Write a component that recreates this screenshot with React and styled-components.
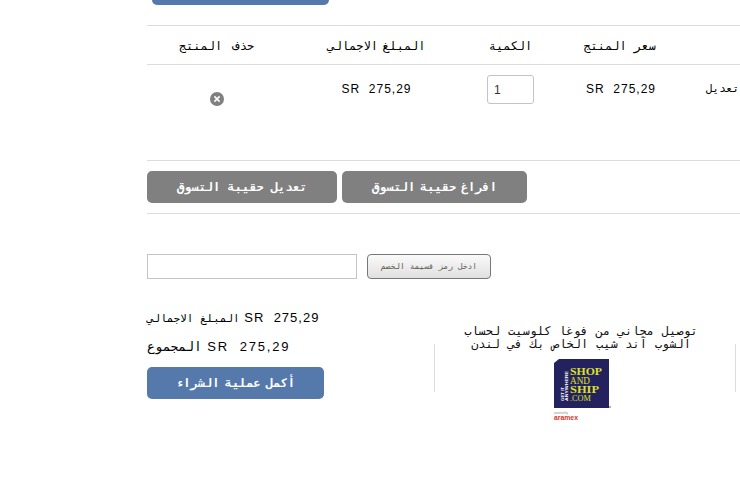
import React from 'react'
import styled, { createGlobalStyle } from 'styled-components'

const latin = '"Liberation Sans", sans-serif'
const arabic = '"DejaVu Sans Mono", monospace'

const GlobalStyle = createGlobalStyle`
  html, body {
    margin: 0;
    padding: 0;
    background: #fff;
    overflow: hidden;
  }
  body {
    font-family: ${latin};
    color: #000;
  }
`

const Page = styled.div`
  width: 740px;
  height: 480px;
  overflow: hidden;
  box-sizing: border-box;
  padding-left: 147px;
`

const Content = styled.div`
  width: 640px;
`

const TopButton = styled.div`
  width: 177px;
  height: 32px;
  margin: -27px 0 20px 5px;
  background: #5679ac;
  border-radius: 5px;
`

const TableRow = styled.div`
  display: grid;
  grid-template-columns: 139px 181px 87px 134px 99px;
  height: ${p => p.$height}px;
  border-top: 1px solid #ddd;
  box-sizing: border-box;
`

const HeadCell = styled.div`
  display: flex;
  align-items: center;
  justify-content: center;
  padding-top: 2px;
  padding-right: ${p => p.$shift || 0}px;
  font-family: ${arabic};
  font-size: 12px;
  word-spacing: ${p => p.$word || 0}px;
  direction: rtl;
`

const Cell = styled.div`
  display: flex;
  justify-content: ${p => p.$align || 'center'};
  padding-top: ${p => p.$top || 0}px;
  font-size: 12px;
  letter-spacing: 1px;
  white-space: pre;
`

const EditLink = styled.span`
  font-family: ${arabic};
  font-size: 11px;
  direction: rtl;
  margin-left: 18px;
`

const QtyInput = styled.input`
  width: 47px;
  height: 29px;
  box-sizing: border-box;
  border: 1px solid #c4c4c4;
  border-radius: 3px;
  padding: 0 0 0 6px;
  font: 12px ${latin};
  color: #333;
  outline: none;
`

const CartActions = styled.div`
  display: flex;
  gap: 5px;
  height: 54px;
  box-sizing: border-box;
  padding-top: 10px;
  border-top: 1px solid #ddd;
  border-bottom: 1px solid #ddd;
`

const GreyButton = styled.button`
  height: 32px;
  width: ${p => p.$width}px;
  border: 0;
  border-radius: 5px;
  padding: 0;
  background: #808080;
  color: #fff;
  font: bold 12px ${arabic};
  word-spacing: ${p => p.$word || 0}px;
  direction: rtl;
`

const CouponRow = styled.div`
  display: flex;
  gap: 10px;
  margin-top: 40px;
`

const CouponInput = styled.input`
  width: 210px;
  height: 25px;
  box-sizing: border-box;
  border: 1px solid #c4c4c4;
  outline: none;
  padding: 0;
`

const CouponButton = styled.button`
  width: 124px;
  height: 25px;
  box-sizing: border-box;
  border: 1px solid #777;
  border-radius: 4px;
  padding: 0;
  background: linear-gradient(#fafafa, #e0e0e0);
  color: #5c5a50;
  font: 8px ${arabic};
  direction: rtl;
`

const Bottom = styled.div`
  display: flex;
  margin-top: 30px;
`

const Totals = styled.div`
  width: 287px;
  display: flex;
  flex-direction: column;
  align-items: flex-start;
`

const TotalLine = styled.div`
  direction: rtl;
  height: 29px;
  line-height: 18px;
  font-size: 13px;
  letter-spacing: ${p => p.$spacing}px;
  white-space: pre;
`

const TotalLabel = styled.span`
  font-family: ${arabic};
  font-size: ${p => p.$size}px;
`

const BuyButton = styled.button`
  width: 177px;
  height: 32px;
  border: 0;
  border-radius: 5px;
  padding: 0;
  background: #5679ac;
  color: #fff;
  font: bold 12px ${arabic};
  word-spacing: -2px;
  direction: rtl;
`

const Promo = styled.div`
  width: 302px;
  display: flex;
  flex-direction: column;
  align-items: center;
  box-sizing: border-box;
  padding-right: 8px;
  margin-top: 16px;
`

const PromoText = styled.div`
  direction: rtl;
  width: 270px;
  text-align: center;
  font-family: ${arabic};
  font-size: 12px;
  line-height: 13px;
  word-spacing: 0.5px;
  color: #111;
`

const PromoBody = styled.div`
  width: 100%;
  display: flex;
  justify-content: center;
  box-sizing: border-box;
  padding-left: 1px;
  margin-top: 8px;
`

const PromoRules = styled.div`
  position: absolute;
  align-self: flex-start;
  width: 302px;
  height: 48px;
  margin-top: 19px;
  box-sizing: border-box;
  border-left: 1px solid #ddd;
  border-right: 1px solid #ddd;
`

const RemoveIcon = () => (
  <svg width="14" height="14" viewBox="0 0 14 14">
    <circle cx="7" cy="7" r="7" fill="#808080" />
    <path d="M4.4 4.4l5.2 5.2M9.6 4.4l-5.2 5.2" stroke="#fff" strokeWidth="1.6" />
  </svg>
)

const ShopLogo = () => (
  <svg width="55" height="62" viewBox="0 0 55 62" style={{ overflow: 'visible' }}>
    <path d="M0 4L5 0H55V49H0Z" fill="#24215f" />
    <g fontFamily="Liberation Serif, serif" fontWeight="700" fill="#dde222">
      <text x="16" y="16" fontSize="11" textLength="32" lengthAdjust="spacingAndGlyphs">SHOP</text>
      <text x="16" y="25" fontSize="9.5" fontWeight="400" textLength="20" lengthAdjust="spacingAndGlyphs">AND</text>
      <text x="16" y="34" fontSize="11" textLength="29" lengthAdjust="spacingAndGlyphs">SHIP</text>
      <text x="16" y="42" fontSize="9" fontWeight="400" textLength="21" lengthAdjust="spacingAndGlyphs">.COM</text>
    </g>
    <g fontFamily="Liberation Sans, sans-serif" fontWeight="700" fontSize="4" fill="#fff">
      <text transform="translate(10 42) rotate(-90)" textLength="14" lengthAdjust="spacingAndGlyphs">GET IT</text>
      <text transform="translate(14 42) rotate(-90)" textLength="30" lengthAdjust="spacingAndGlyphs">ANYWHERE</text>
    </g>
    <circle cx="56" cy="48" r="1" fill="#999" />
    <text x="0" y="54.5" fontFamily="Liberation Sans, sans-serif" fontSize="3" fill="#999" textLength="14">powered by</text>
    <text x="0" y="61" fontFamily="Liberation Sans, sans-serif" fontWeight="700" fontSize="7.5" fill="#d8352a" textLength="24" lengthAdjust="spacingAndGlyphs">aramex</text>
  </svg>
)

const price = 'SR  275,29'

function App() {
  return (
    <Page>
      <GlobalStyle />
      <Content>
        <TopButton />
        <TableRow $height={39}>
          <HeadCell $word={3}>حذف المنتج</HeadCell>
          <HeadCell $word={-3}>المبلغ الاجمالي</HeadCell>
          <HeadCell>الكمية</HeadCell>
          <HeadCell $shift={3}>سعر المنتج</HeadCell>
          <HeadCell />
        </TableRow>
        <TableRow $height={96}>
          <Cell $top={27}><RemoveIcon /></Cell>
          <Cell $top={17}>{price}</Cell>
          <Cell $top={10}><QtyInput defaultValue="1" /></Cell>
          <Cell $top={17}>{price}</Cell>
          <Cell $top={17} $align="flex-start"><EditLink>تعديل</EditLink></Cell>
        </TableRow>
        <CartActions>
          <GreyButton $width={190}>تعديل حقيبة التسوق</GreyButton>
          <GreyButton $width={185} $word={-2.5}>افراغ حقيبة التسوق</GreyButton>
        </CartActions>
        <CouponRow>
          <CouponInput />
          <CouponButton>ادخل رمز قسيمة الخصم</CouponButton>
        </CouponRow>
        <Bottom>
          <Totals>
            <TotalLine $spacing={1}><bdi>{price}</bdi> <TotalLabel $size={11}>المبلغ الاجمالي</TotalLabel></TotalLine>
            <TotalLine $spacing={1.8}><bdi>{price}</bdi> <TotalLabel $size={13}>المجموع</TotalLabel></TotalLine>
            <BuyButton>أكمل عملية الشراء</BuyButton>
          </Totals>
          <Promo>
            <PromoRules />
            <PromoText>توصيل مجاني من فوغا كلوسيت لحساب الشوب آند شيب الخاص بك في لندن</PromoText>
            <PromoBody><ShopLogo /></PromoBody>
          </Promo>
        </Bottom>
      </Content>
    </Page>
  )
}

export default App
